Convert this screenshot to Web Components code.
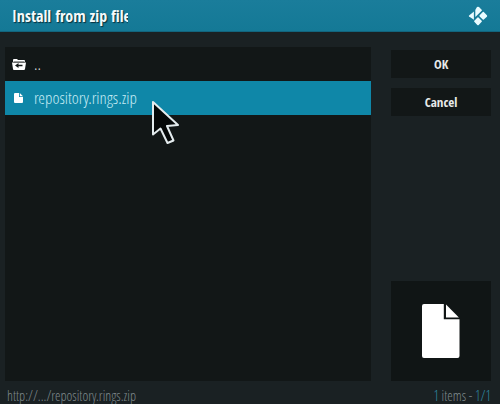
<!DOCTYPE html>
<html lang="en">
<head>
<meta charset="utf-8">
<title>Install from zip file</title>
<style>
  body {
    margin: 0;
    background: #1a2123;
    font-family: "Open Sans Condensed", "Open Sans", sans-serif;
    --light-font: "Open Sans Condensed Light", "Open Sans Light Condensed", "OpenSans-CondensedLight", "OpenSans-CondLight", "Noto Sans Condensed", "Roboto Condensed", Lato, sans-serif;
  }
</style>
</head>
<body>
<file-dialog></file-dialog>

<script>
const define = (name, html) => {
  const template = document.createElement("template");
  template.innerHTML = html;
  customElements.define(name, class extends HTMLElement {
    constructor() {
      super();
      this.attachShadow({ mode: "open" });
      this.shadowRoot.appendChild(template.content.cloneNode(true));
    }
  });
};

define("kodi-logo", /*html*/`
  <style>
    :host { display: block; }
    svg { display: block; }
  </style>
  <svg width="20" height="20" viewBox="0 0 20 20" fill="#e9fbff" aria-hidden="true">
    <path d="M10 .7q.6 0 1 .4l2.700 2.700q.5.500 0 1L7.900 10.600q-.6.600-.6-.3V4.100q0-.5.400-.9L9 1.100q.4-.4 1-.4z"/>
    <path d="M5.900 5.500v8.300L1.100 10.600q-.7-.6 0-1.200z"/>
    <path d="M14.800 5.900q.5-.5 1 0l3.100 3.400q.6.700 0 1.400l-3.100 2.800q-.5.500-1 0l-3.200-3q-.5-.600 0-1.200z"/>
    <path d="M9.500 11.600q.5-.5 1 0l3.200 3.100q.5.500 0 1l-3 3.200q-.7.600-1.400 0l-3-3.200q-.5-.500 0-1z"/>
  </svg>`);

define("dialog-header", /*html*/`
  <style>
    :host {
      display: flex;
      align-items: center;
      justify-content: space-between;
      box-sizing: border-box;
      height: 32px;
      padding: 0 12px;
      background: linear-gradient(#1a7d9b, #147996);
      border-bottom: 1px solid #12657e;
    }
    h1 {
      margin: 0;
      max-width: 116px;
      overflow: hidden;
      white-space: nowrap;
      font-size: 16px;
      line-height: 24px;
      color: #f4fafb;
      text-shadow: 1px 1px 1px #082f3b;
    }
  </style>
  <h1><slot></slot></h1>
  <kodi-logo></kodi-logo>`);

define("file-row", /*html*/`
  <style>
    :host {
      display: flex;
      align-items: center;
      gap: 8px;
      height: 34px;
      padding: 0 6px;
      font-family: var(--light-font);
      font-size: 17px;
      line-height: 24px;
      color: #d8dbdb;
    }
    :host([selected]) {
      background: #0f87a8;
      color: #c6ebf4;
    }
    .icon { display: flex; width: 15px; justify-content: center; }
  </style>
  <span class="icon"><slot name="icon"></slot></span>
  <span><slot></slot></span>`);

define("file-list", /*html*/`
  <style>
    :host {
      display: block;
      background: #121717;
    }
  </style>
  <slot></slot>`);

define("dialog-button", /*html*/`
  <style>
    :host { display: block; }
    button {
      display: block;
      width: 100%;
      height: 28px;
      padding: 0;
      border: 0;
      background: #121717;
      color: #e8eaea;
      font-family: inherit;
      font-size: 13px;
      font-weight: bold;
    }
  </style>
  <button type="button"><slot></slot></button>`);

define("file-preview", /*html*/`
  <style>
    :host {
      display: flex;
      align-items: center;
      justify-content: center;
      aspect-ratio: 1;
      background: #101515;
    }
    svg { display: block; }
  </style>
  <svg width="38" height="54" viewBox="0 0 38 54" fill="#fff" aria-hidden="true">
    <path d="M2 0h19.800v15.300h15.700V52q0 2-2 2H2q-2 0-2-2V2q0-2 2-2z"/>
    <path d="M24 .6L36.900 13.500H24z"/>
  </svg>`);

define("dialog-footer", /*html*/`
  <style>
    :host {
      display: flex;
      justify-content: space-between;
      padding: 7px 9px 0 7px;
      font-family: var(--light-font);
      font-size: 14px;
      line-height: 16px;
      color: #7f898c;
    }
  </style>
  <slot name="path"></slot>
  <slot name="count"></slot>`);

define("mouse-pointer", /*html*/`
  <style>
    :host {
      position: absolute;
      left: 151px;
      top: 100px;
      pointer-events: none;
    }
    svg { display: block; }
  </style>
  <svg width="30" height="46" viewBox="0 0 30 46" aria-hidden="true">
    <path d="M2 2v32.500l7.500-6 7 14.500 6-2.500-6.500-14.500 11-1z" fill="#050808" stroke="#e4ecee" stroke-width="2" stroke-linejoin="round"/>
  </svg>`);

define("file-dialog", /*html*/`
  <style>
    :host {
      display: flex;
      flex-direction: column;
      position: relative;
      min-height: 100vh;
    }
    main {
      flex: 1;
      display: grid;
      grid-template-columns: 11fr 3fr;
      gap: 20px;
      padding: 15px 9px 0 5px;
    }
    aside {
      display: flex;
      flex-direction: column;
      gap: 10px;
      padding-top: 3px;
    }
    file-preview { margin-top: auto; }
    svg { display: block; }
    b { font-weight: inherit; color: #2f8aa3; }
  </style>
  <dialog-header>Install from zip file</dialog-header>
  <main>
    <file-list>
      <file-row>
        <svg slot="icon" width="14" height="11" viewBox="0 0 14 11" aria-hidden="true">
          <path d="M1 3V1q0-1 1-1h3l1 1h6q1 0 1 1v1z" fill="#fff"/>
          <path d="M0 3.500h14L13 10q-.2 1-1 1H2q-1 0-1-1z" fill="#fff"/>
          <path d="M3 6.500L6.500 4v1.700h4v1.600h-4V9z" fill="#121717"/>
          <path d="M1.500 2.900h11" stroke="#121717" stroke-width=".7"/>
        </svg>
        ..
      </file-row>
      <file-row selected>
        <svg slot="icon" width="9" height="10" viewBox="0 0 9 10" aria-hidden="true">
          <path d="M1 0h4v4h4v5q0 1-1 1H1q-1 0-1-1V1q0-1 1-1zM5.800 0L9 3.200H5.800z" fill="#fff"/>
        </svg>
        repository.rings.zip
      </file-row>
    </file-list>
    <aside>
      <dialog-button>OK</dialog-button>
      <dialog-button>Cancel</dialog-button>
      <file-preview></file-preview>
    </aside>
  </main>
  <dialog-footer>
    <span slot="path">http://.../repository.rings.zip</span>
    <span slot="count"><b>1</b> items - <b>1/1</b></span>
  </dialog-footer>
  <mouse-pointer></mouse-pointer>`);
</script>
</body>
</html>
